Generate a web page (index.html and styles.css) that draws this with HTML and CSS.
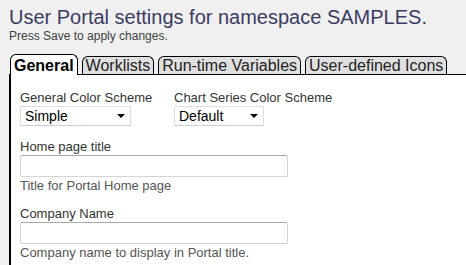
FILE: index.html
```html
<!DOCTYPE html>
<html lang="en">
  <head>
    <meta charset="UTF-8" />
    <title>User Portal Settings</title>
    <link rel="stylesheet" href="styles.css">
  </head>
  <body>
    <div class="page-header">
      <h1 class="page-title">User Portal settings for namespace SAMPLES.</h1>
      <p class="page-subtitle">Press Save to apply changes.</p>
    </div>

    <div class="tabs">
      <div class="tab active">General</div>
      <div class="tab">Worklists</div>
      <div class="tab">Run-time Variables</div>
      <div class="tab">User-defined Icons</div>
    </div>

    <div class="tab-panel">
      <div class="row">
        <div class="form-group scheme-group">
          <label for="colorScheme">General Color Scheme</label>
          <div class="select-box select-wide" id="colorScheme">
            <span>Simple</span>
            <span class="caret"></span>
          </div>
        </div>
        <div class="form-group">
          <label for="chartScheme">Chart Series Color Scheme</label>
          <div class="select-box select-narrow" id="chartScheme">
            <span>Default</span>
            <span class="caret"></span>
          </div>
        </div>
      </div>

      <div class="form-group">
        <label for="homeTitle">Home page title</label>
        <input type="text" id="homeTitle" />
        <p class="hint">Title for Portal Home page</p>
      </div>

      <div class="form-group">
        <label for="company">Company Name</label>
        <input type="text" id="company" />
        <p class="hint">Company name to display in Portal title.</p>
      </div>
    </div>
  </body>
</html>
```

FILE: styles.css
```css
* {
  margin: 0;
  padding: 0;
  box-sizing: border-box;
}

body {
  font-family: "Liberation Sans", Arial, sans-serif;
  background-color: #f0f0f0;
  padding: 6px 0 0 9px;
  overflow: hidden;
}

.page-title {
  font-size: 20px;
  font-weight: normal;
  color: #3b3b62;
  line-height: 23px;
}

.page-subtitle {
  font-size: 12px;
  color: #404040;
  line-height: 14px;
}

/* Tab strip */
.tabs {
  display: flex;
  align-items: flex-end;
  gap: 4px;
  margin-top: 11px;
  padding-left: 1px;
}

.tab {
  font-size: 16px;
  line-height: 17px;
  padding: 0 3px;
  border: 1px solid #000;
  border-bottom: none;
  border-radius: 6px 6px 0 0;
  background-color: #e0e0e0;
  color: #222;
}

.tab.active {
  background-color: #fff;
  font-weight: bold;
  color: #000;
  padding: 2px 3px 1px;
  margin-bottom: -1px;
  position: relative;
}

.tab-panel {
  background-color: #fff;
  border-top: 1px solid #000;
  border-left: 2px solid #000;
  padding: 15px 0 20px 9px;
  height: 200px;
}

/* Form */
.row {
  display: flex;
}

.scheme-group {
  width: 154px;
}

.form-group {
  margin-bottom: 13px;
}

.form-group label {
  display: block;
  font-size: 13px;
  line-height: 15px;
  color: #333;
  margin-bottom: 1px;
}

.select-box {
  display: flex;
  align-items: center;
  justify-content: space-between;
  height: 20px;
  border: 1px solid #dedede;
  border-bottom-color: #cfcfcf;
  background-color: #fff;
  font-size: 14px;
  color: #000;
  padding: 0 5px 0 4px;
}

.select-wide {
  width: 111px;
}

.select-narrow {
  width: 90px;
}

.caret {
  width: 0;
  height: 0;
  border-left: 4px solid transparent;
  border-right: 4px solid transparent;
  border-top: 4px solid #000;
}

.form-group input {
  display: block;
  width: 268px;
  height: 22px;
  border: 1px solid #d4d4d4;
  border-top-color: #a8a8a8;
  border-radius: 2px;
  background-color: #fff;
}

.hint {
  font-size: 13px;
  line-height: 15px;
  color: #555;
  margin-top: 1px;
}
```
